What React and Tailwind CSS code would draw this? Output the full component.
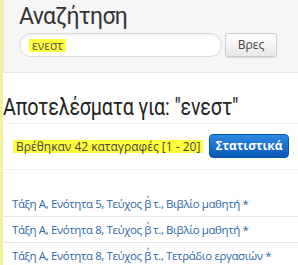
export default function App() {
  const links = [
    'Τάξη Α, Ενότητα 5, Τεύχος β΄ τ., Βιβλίο μαθητή',
    'Τάξη Α, Ενότητα 8, Τεύχος β΄ τ., Βιβλίο μαθητή',
    'Τάξη Α, Ενότητα 8, Τεύχος β΄ τ., Τετράδιο εργασιών',
  ];

  return (
    <div className="w-[298px] h-[265px] overflow-hidden bg-white border-l-[3px] border-[#f3f39a] font-['Open_Sans',sans-serif]">
      {/* search panel */}
      <div className="h-[73px] bg-[#f6f6f6] border-l border-b border-[#e6e6e6] pl-[15px] pt-[3px]">
        <h2 className="text-[23px] leading-[28px] text-[#333] font-['Roboto',sans-serif] tracking-[-0.7px]">Αναζήτηση</h2>
        <div className="flex items-center gap-[3px] mt-[2px]">
          <div className="w-[203px] h-[24px] rounded-full bg-white border border-[#d8d8d8] flex items-center pl-[9px] shadow-[inset_0_1px_2px_rgba(0,0,0,0.08)]">
            <span className="bg-[#ffff3b] text-[12px] leading-[13px] text-[#555] px-[3px]">ενεστ</span>
          </div>
          <button className="w-[52px] h-[24px] rounded-[3px] border border-[#cfcfcf] bg-gradient-to-b from-white to-[#e8e8e8] text-[12px] text-[#444] shadow-[0_1px_1px_rgba(0,0,0,0.1)]">
            Βρες
          </button>
        </div>
      </div>

      {/* results heading */}
      <h1 className="mt-[19px] whitespace-nowrap text-[24px] leading-[30px] text-[#222] pb-[1px] border-b border-[#f0f0f0] font-['Roboto',sans-serif]">
        <span className="inline-block origin-left scale-x-[0.82] tracking-[-0.2px]">Αποτελέσματα για: "ενεστ"</span>
      </h1>

      <div className="flex items-center justify-between pl-[10px] pr-[9px] pt-[10px] pb-[11px] border-b border-[#eee]">
        <span className="bg-[#ffff3b] text-[12px] leading-[13px] text-[#444] px-[3px]">Βρέθηκαν 42 καταγραφές [1 - 20]</span>
        <button className="w-[80px] h-[24px] rounded-[4px] bg-gradient-to-b from-[#2d8ae0] to-[#0757b7] text-white text-[12px] font-bold border border-[#0a55a8]">
          Στατιστικά
        </button>
      </div>

      <div className="mt-[21px]">
        {links.map((t, i) => (
          <div key={i} className={`pl-[9px] h-[26px] flex items-center ${i < 2 ? 'border-b border-[#e8e8e8]' : ''}`}>
            <span className="text-[11.5px] text-[#2c6aa6] tracking-[-0.4px]">
              {t} <span className="text-[#2c6aa6]">*</span>
            </span>
          </div>
        ))}
      </div>
    </div>
  );
}
